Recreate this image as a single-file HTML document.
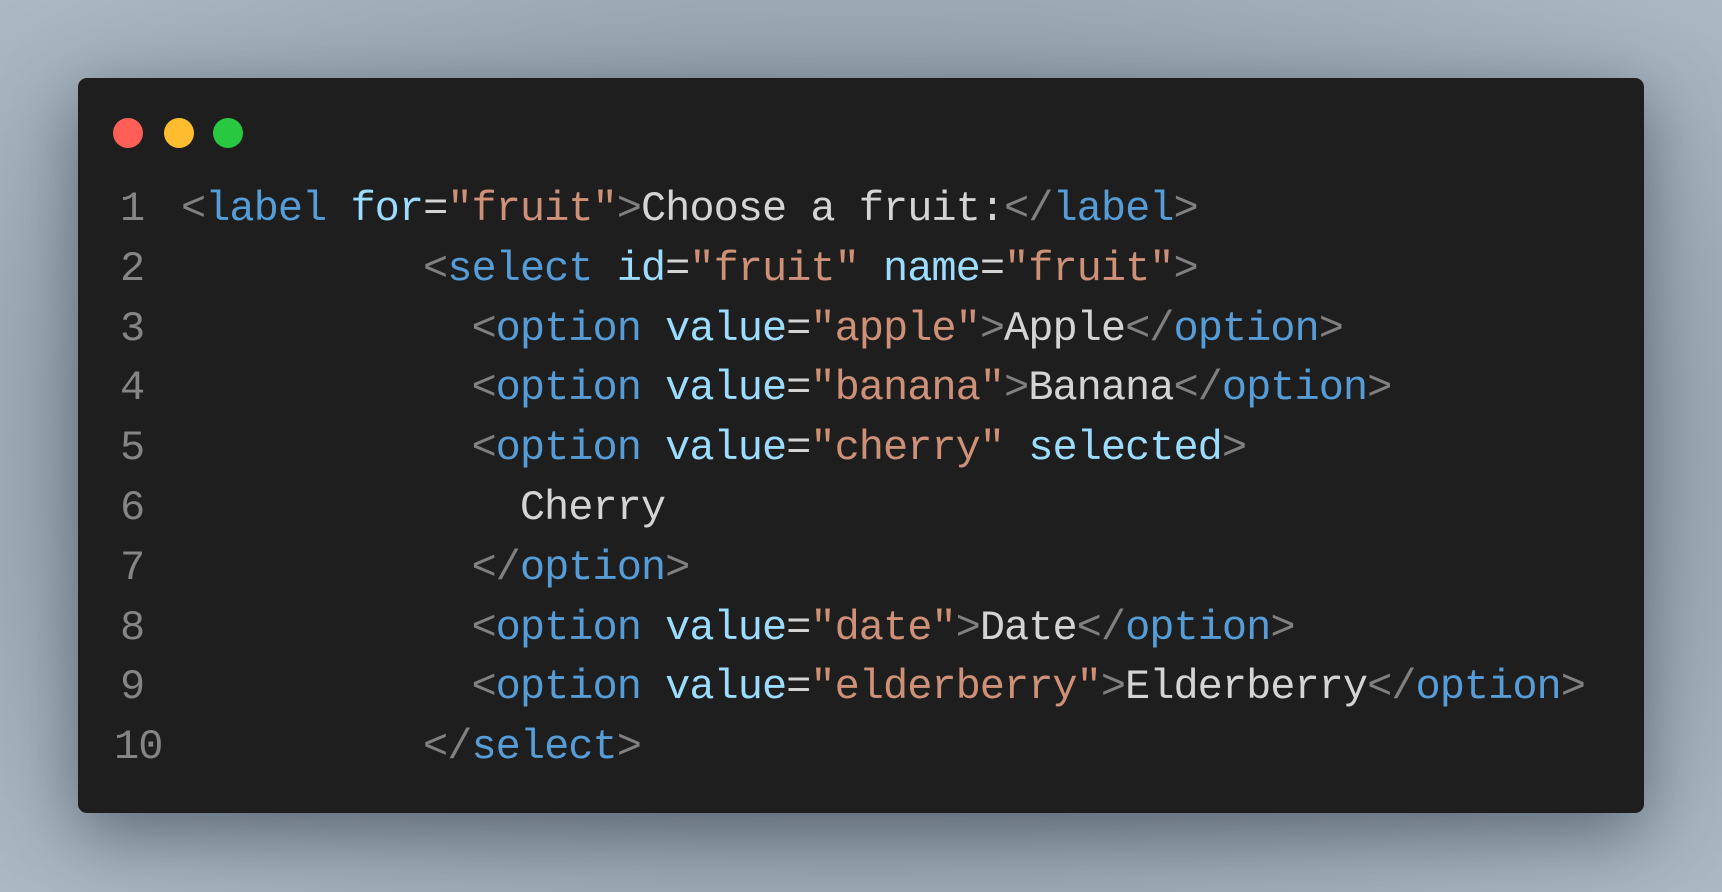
<!DOCTYPE html>
<html><head><style>
html,body{margin:0;width:1722px;height:892px;overflow:hidden}
body{background:radial-gradient(ellipse at 50% 50%,#7d8893 0%,#96a3ae 60%,#acb9c5 100%);position:relative}
.win{position:absolute;left:78px;top:78px;width:1566px;height:735px;background:#1e1e1e;border-radius:9px;box-shadow:0 20px 70px rgba(40,50,60,.55)}
.dot{position:absolute;top:118px;width:30px;height:30px;border-radius:50%}
.code{position:absolute;left:0;top:180px;font-family:"Liberation Mono",monospace;font-size:42px;letter-spacing:-1px;line-height:59.8px;color:#d4d4d4}
.r{position:relative;height:59.8px}
.ln{position:absolute;left:120px;color:#858585}
.ln.w{left:114px}
.l{position:absolute;left:181px;white-space:pre}
.p{color:#808080}.t{color:#569cd6}.a{color:#9cdcfe}.s{color:#ce9178}
</style></head><body>
<div class="win"></div>
<div class="dot" style="left:113px;background:#ff5f57"></div>
<div class="dot" style="left:164px;background:#febc2e"></div>
<div class="dot" style="left:213px;background:#28c840"></div>
<div class="code"><div class="r"><span class="ln">1</span><span class="l"><span class="p">&lt;</span><span class="t">label</span> <span class="a">for</span>=<span class="s">"fruit"</span><span class="p">&gt;</span>Choose a fruit:<span class="p">&lt;/</span><span class="t">label</span><span class="p">&gt;</span></span></div><div class="r"><span class="ln">2</span><span class="l">          <span class="p">&lt;</span><span class="t">select</span> <span class="a">id</span>=<span class="s">"fruit"</span> <span class="a">name</span>=<span class="s">"fruit"</span><span class="p">&gt;</span></span></div><div class="r"><span class="ln">3</span><span class="l">            <span class="p">&lt;</span><span class="t">option</span> <span class="a">value</span>=<span class="s">"apple"</span><span class="p">&gt;</span>Apple<span class="p">&lt;/</span><span class="t">option</span><span class="p">&gt;</span></span></div><div class="r"><span class="ln">4</span><span class="l">            <span class="p">&lt;</span><span class="t">option</span> <span class="a">value</span>=<span class="s">"banana"</span><span class="p">&gt;</span>Banana<span class="p">&lt;/</span><span class="t">option</span><span class="p">&gt;</span></span></div><div class="r"><span class="ln">5</span><span class="l">            <span class="p">&lt;</span><span class="t">option</span> <span class="a">value</span>=<span class="s">"cherry"</span> <span class="a">selected</span><span class="p">&gt;</span></span></div><div class="r"><span class="ln">6</span><span class="l">              Cherry</span></div><div class="r"><span class="ln">7</span><span class="l">            <span class="p">&lt;/</span><span class="t">option</span><span class="p">&gt;</span></span></div><div class="r"><span class="ln">8</span><span class="l">            <span class="p">&lt;</span><span class="t">option</span> <span class="a">value</span>=<span class="s">"date"</span><span class="p">&gt;</span>Date<span class="p">&lt;/</span><span class="t">option</span><span class="p">&gt;</span></span></div><div class="r"><span class="ln">9</span><span class="l">            <span class="p">&lt;</span><span class="t">option</span> <span class="a">value</span>=<span class="s">"elderberry"</span><span class="p">&gt;</span>Elderberry<span class="p">&lt;/</span><span class="t">option</span><span class="p">&gt;</span></span></div><div class="r"><span class="ln w">10</span><span class="l">          <span class="p">&lt;/</span><span class="t">select</span><span class="p">&gt;</span></span></div></div>
</body></html>
